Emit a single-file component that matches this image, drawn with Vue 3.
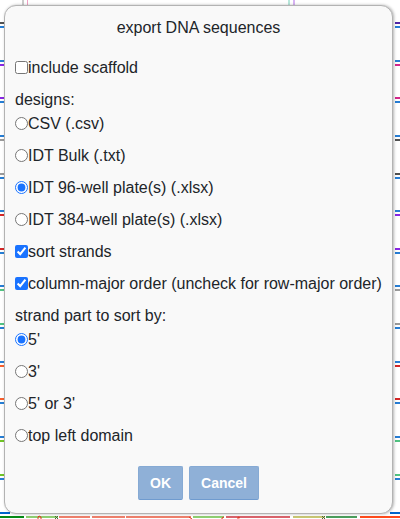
<script setup>
import { ref } from 'vue'

const scaffold = ref(false)
const format = ref('xlsx96')
const sort = ref(true)
const columnMajor = ref(true)
const part = ref('five')

const formats = [
  { id: 'csv', label: 'CSV (.csv)' },
  { id: 'txt', label: 'IDT Bulk (.txt)' },
  { id: 'xlsx96', label: 'IDT 96-well plate(s) (.xlsx)' },
  { id: 'xlsx384', label: 'IDT 384-well plate(s) (.xlsx)' },
]
const parts = [
  { id: 'five', label: "5'" },
  { id: 'three', label: "3'" },
  { id: 'either', label: "5' or 3'" },
  { id: 'domain', label: 'top left domain' },
]

const rows = [22, 60, 97, 135, 173, 210, 248, 285, 323, 361, 398, 436, 474]
const leftColors = ['#333333', '#7300de', '#7300de', '#888888', '#888888', '#cc0000', '#cc0000', '#32b86c', '#32b86c', '#f74308', '#f74308', '#57bb00', '#57bb00']
const rightColors = ['#320096', '#cc0077', '#cc0077', '#333333', '#333333', '#7300de', '#7300de', '#888888', '#888888', '#cc0000', '#cc0000', '#32b86c', '#32b86c']
// The scaffold (blue) swaps sides with the staple on every other helix.
const strands = (colors) =>
  rows.flatMap((y, i) => [
    { y, color: i % 2 ? '#0066cc' : colors[i] },
    { y: y + 4, color: i % 2 ? colors[i] : '#0066cc' },
  ])
const left = strands(leftColors)
const right = strands(rightColors)
const bottom = [
  [0, 24, '#078a16'], [26, 32, '#8fce72'], [59, 31, '#ee806c'], [92, 33, '#ee806c'],
  [126, 65, '#ee806c'], [193, 31, '#8fce72'], [226, 64, '#d9636b'], [293, 32, '#c8c673'],
  [326, 31, '#4c9d5c'], [360, 40, '#ff4b1c'],
]
</script>

<template>
  <main class="page">
    <svg class="canvas" aria-hidden="true">
      <rect x="22" y="0" width="2" height="8" fill="#cccccc" />
      <rect x="27" y="0" width="1" height="8" fill="#f0a0c4" />
      <rect x="288" y="0" width="2" height="8" fill="#b9e8dc" />
      <rect x="293" y="0" width="2" height="8" fill="#d8b4f4" />
      <rect v-for="s in left" :key="s.y" x="0" :y="s.y" width="4" height="2" :fill="s.color" fill-opacity="0.85" />
      <rect x="0" y="512" width="10" height="2" fill="#0066cc" />
      <rect x="390" y="512" width="10" height="2" fill="#0066cc" />
      <rect v-for="b in bottom" :key="b[0]" :x="b[0]" y="516" :width="b[1]" height="2" :fill="b[2]" />
      <path d="M38 519v-2l1-1 2 1v2M222 519v-1l2-1M238 519v-2l2 1M189 517l3 2" fill="none" stroke="#e2361c" />
      <path d="M55 516l3 3M58 516l-3 3M322 516l3 3M325 516l-3 3" fill="none" stroke="#4a6435" />
    </svg>
    <svg class="canvas edge" aria-hidden="true">
      <rect v-for="s in right" :key="s.y" x="0" :y="s.y" width="5" height="2" :fill="s.color" fill-opacity="0.85" />
    </svg>
    <form class="dialog" role="dialog" aria-labelledby="title" @submit.prevent>
      <h1 id="title">export DNA sequences</h1>
      <label class="row"><input v-model="scaffold" type="checkbox" />include scaffold</label>
      <fieldset>
        <legend>designs:</legend>
        <label v-for="f in formats" :key="f.id" class="row">
          <input v-model="format" type="radio" name="format" :value="f.id" />{{ f.label }}
        </label>
      </fieldset>
      <label class="row"><input v-model="sort" type="checkbox" />sort strands</label>
      <label class="row"><input v-model="columnMajor" type="checkbox" />column-major order (uncheck for row-major order)</label>
      <fieldset>
        <legend>strand part to sort by:</legend>
        <label v-for="p in parts" :key="p.id" class="row">
          <input v-model="part" type="radio" name="part" :value="p.id" />{{ p.label }}
        </label>
      </fieldset>
      <div class="actions">
        <button type="submit">OK</button>
        <button type="button">Cancel</button>
      </div>
    </form>
  </main>
</template>

<style>
body {
  margin: 0;
  background: #fff;
}
</style>

<style scoped>
.page {
  position: relative;
  overflow: hidden;
  padding: 5px 7px 6px 4px;
  font-family: "Liberation Sans", Arial, sans-serif;
  font-size: 16px;
  line-height: 24px;
  color: #212529;
}
.canvas {
  position: absolute;
  top: 0;
  left: 0;
  width: 100%;
  height: 100%;
}
.edge {
  left: auto;
  right: 0;
  width: 5px;
}
.dialog {
  position: relative;
  display: flex;
  flex-direction: column;
  gap: 8px;
  padding: 10px 10px 13px;
  border: 1px solid #b3b3b3;
  border-radius: 12px;
  background: #f9f9f9;
  box-shadow: 1px 0 3px rgba(0, 0, 0, 0.3);
}
h1 {
  margin: 0 0 8px;
  font-size: 16px;
  font-weight: 400;
  text-align: center;
}
fieldset {
  display: flex;
  flex-direction: column;
  gap: 8px;
  min-width: 0;
  margin: 0;
  padding: 0;
  border: 0;
}
legend {
  padding: 0;
}
.row {
  display: flex;
  align-items: center;
  white-space: nowrap;
}
input {
  flex: none;
  width: 13px;
  height: 13px;
  margin: 0 0 2px;
  accent-color: #1a73ff;
}
.actions {
  display: flex;
  justify-content: center;
  gap: 6px;
  padding-top: 10px;
}
button {
  height: 34px;
  padding: 0 11px;
  border: 1px solid #86aad4;
  border-bottom-color: #6f9bcf;
  border-radius: 2px;
  background: #8fb0d7;
  color: #fff;
  font: 700 14px/20px "Liberation Sans", Arial, sans-serif;
}
</style>
